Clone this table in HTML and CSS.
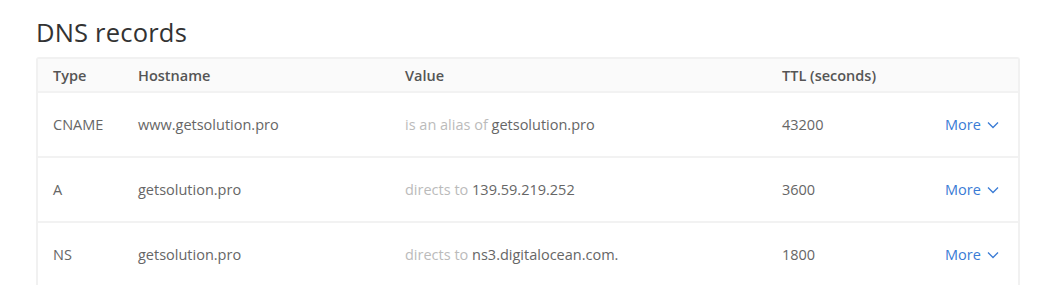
FILE: index.html
```html
<!DOCTYPE html>
<html>
<head>
<meta charset="utf-8">
<link rel="stylesheet" href="styles.css">
</head>
<body>
<div class="page">
  <h1 class="title">DNS records</h1>
  <div class="table">
    <div class="row head">
      <div class="c type">Type</div>
      <div class="c host">Hostname</div>
      <div class="c value">Value</div>
      <div class="c ttl">TTL (seconds)</div>
      <div class="c more"></div>
    </div>
    <div class="row">
      <div class="c type">CNAME</div>
      <div class="c host">www.getsolution.pro</div>
      <div class="c value"><span class="muted">is an alias of</span> getsolution.pro</div>
      <div class="c ttl">43200</div>
      <div class="c more"><span class="link">More <svg class="chev" width="12" height="8" viewBox="0 0 12 8"><path d="M1 1.5 L6 6.5 L11 1.5" fill="none" stroke="currentColor" stroke-width="1.3"/></svg></span></div>
    </div>
    <div class="row">
      <div class="c type">A</div>
      <div class="c host">getsolution.pro</div>
      <div class="c value"><span class="muted">directs to</span> 139.59.219.252</div>
      <div class="c ttl">3600</div>
      <div class="c more"><span class="link">More <svg class="chev" width="12" height="8" viewBox="0 0 12 8"><path d="M1 1.5 L6 6.5 L11 1.5" fill="none" stroke="currentColor" stroke-width="1.3"/></svg></span></div>
    </div>
    <div class="row">
      <div class="c type">NS</div>
      <div class="c host">getsolution.pro</div>
      <div class="c value"><span class="muted">directs to</span> ns3.digitalocean.com.</div>
      <div class="c ttl">1800</div>
      <div class="c more"><span class="link">More <svg class="chev" width="12" height="8" viewBox="0 0 12 8"><path d="M1 1.5 L6 6.5 L11 1.5" fill="none" stroke="currentColor" stroke-width="1.3"/></svg></span></div>
    </div>
  </div>
</div>
</body>
</html>
```
FILE: styles.css
```css
html, body { margin: 0; padding: 0; background: #fff; }
body { font-family: "Open Sans", "Liberation Sans", sans-serif; color: #444; }
.page { padding: 16px 22px 0 36px; }
.title {
  margin: 0 0 9px 0;
  font-size: 25.5px;
  font-weight: 400;
  color: #333;
  line-height: 32px;
  letter-spacing: 0.2px;
}
.table {
  border: 2px solid #f1f1f1;
  border-bottom: none;
  border-radius: 3px 3px 0 0;
}
.row {
  display: grid;
  grid-template-columns: 100px 267px 377px 163px 1fr;
  height: 63px;
  align-items: center;
  border-top: 2px solid #f2f2f2;
  font-size: 14.5px;
  color: #666;
}
.row.head {
  height: 32px;
  border-top: none;
  background: #fafafa;
  font-weight: 600;
  color: #555;
}
.c.type { padding-left: 15px; }
.muted { color: #bbb; }
.link { color: #3a7bd5; display: inline-flex; align-items: center; gap: 6px; }
.chev { margin-top: 1px; }
```
